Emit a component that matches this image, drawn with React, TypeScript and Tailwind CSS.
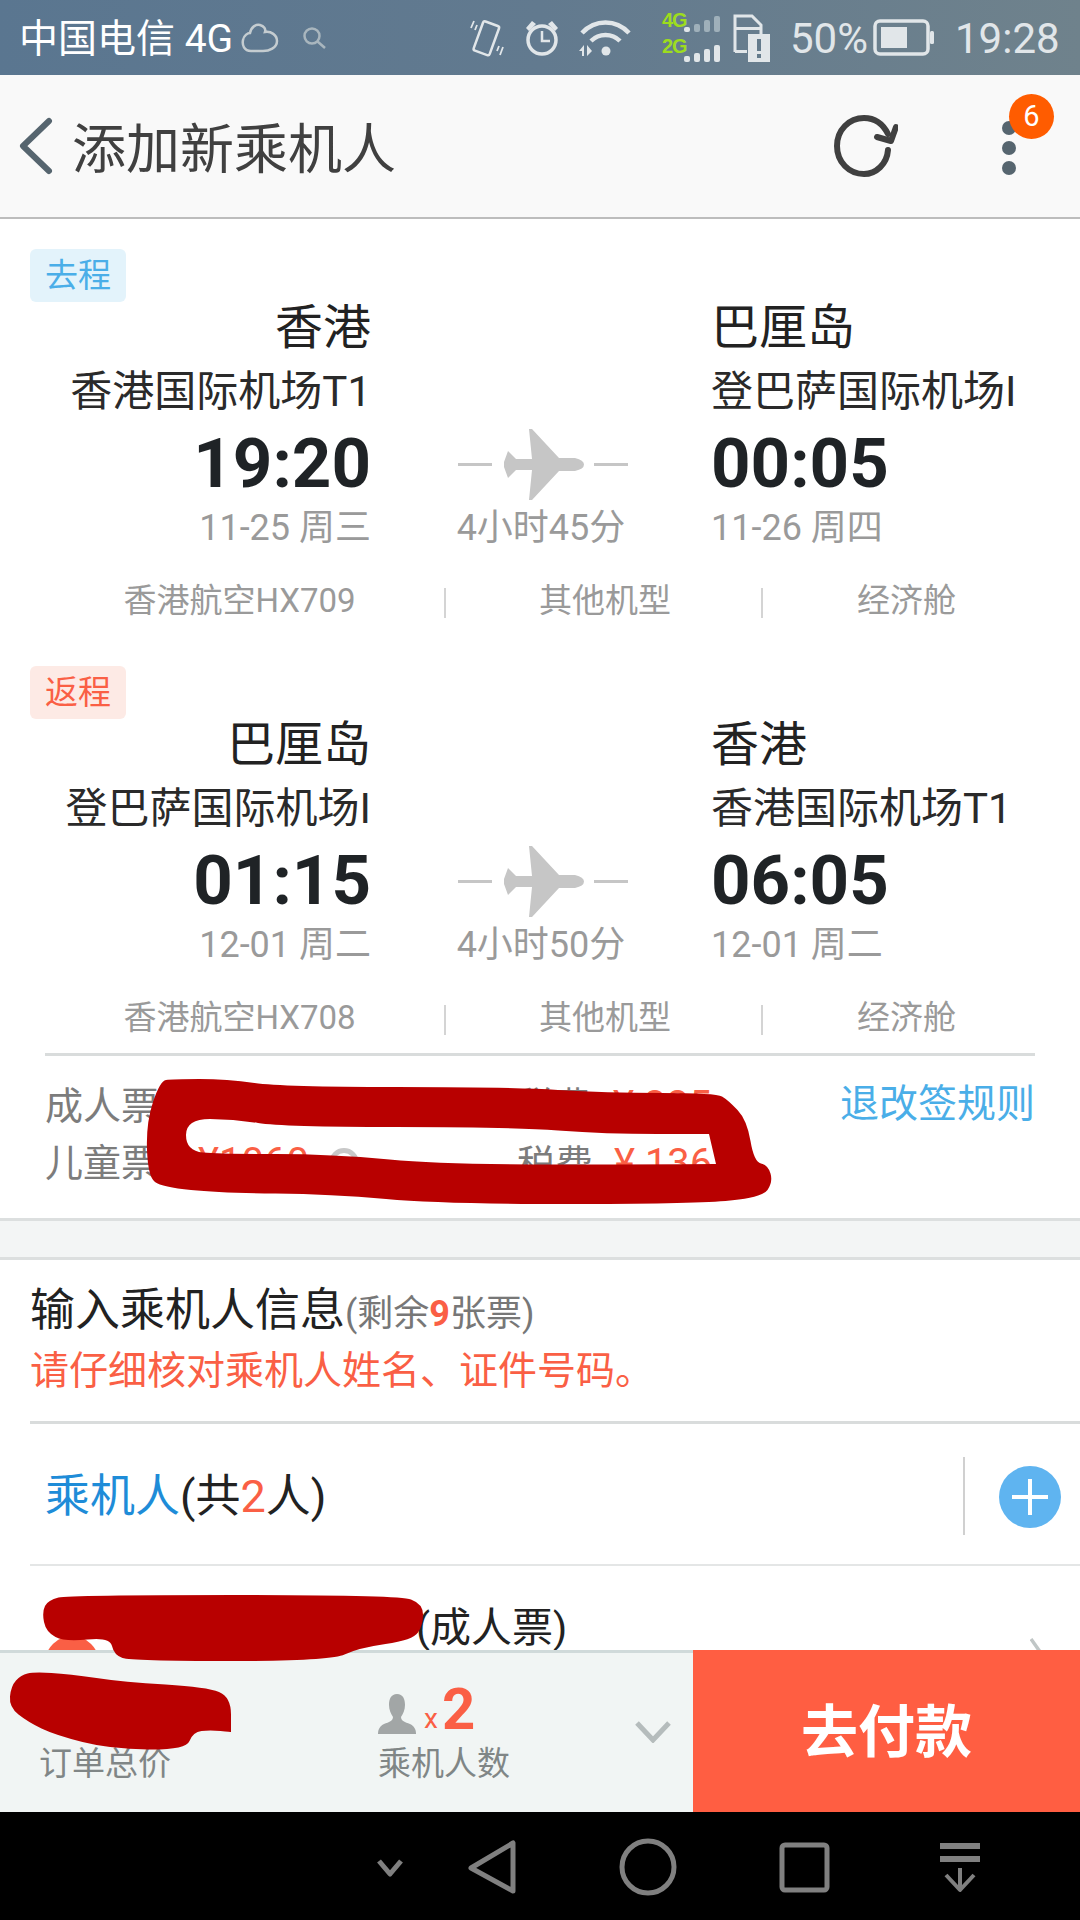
import React from 'react';

const fontStack = "[font-family:Roboto,'Noto_Sans_CJK_SC',sans-serif]";

const flights = [
  {
    tag: '去程',
    tagClass: 'bg-[#e3f3fb] text-[#4aaee8]',
    fromCity: '香港',
    fromPort: '香港国际机场T1',
    fromTime: '19:20',
    fromDate: '11-25 周三',
    toCity: '巴厘岛',
    toPort: '登巴萨国际机场I',
    toTime: '00:05',
    toDate: '11-26 周四',
    duration: '4小时45分',
    flightNo: '香港航空HX709',
  },
  {
    tag: '返程',
    tagClass: 'bg-[#fdeae5] text-[#fa5f45]',
    fromCity: '巴厘岛',
    fromPort: '登巴萨国际机场I',
    fromTime: '01:15',
    fromDate: '12-01 周二',
    toCity: '香港',
    toPort: '香港国际机场T1',
    toTime: '06:05',
    toDate: '12-01 周二',
    duration: '4小时50分',
    flightNo: '香港航空HX708',
  },
];

// rounds off a polygon, a repeated point keeps its corner
const smooth = (pts: number[][]) => {
  const mid = (a: number[], b: number[]) => `${(a[0] + b[0]) / 2} ${(a[1] + b[1]) / 2}`;
  let d = `M${mid(pts[pts.length - 1], pts[0])}`;
  pts.forEach((p, i) => {
    d += ` Q${p[0]} ${p[1]} ${mid(p, pts[(i + 1) % pts.length])}`;
  });
  return d + ' Z';
};

const fareOuter = [[160, 1081], [172, 1079], [227, 1079], [282, 1087], [510, 1087], [606, 1093], [716, 1093], [728, 1100], [747, 1120], [754, 1162], [768, 1165], [773, 1182], [762, 1198], [689, 1204], [441, 1204], [331, 1194], [220, 1193], [162, 1187], [148, 1177], [146, 1123]];
const fareInner = [[186, 1119], [186, 1151], [220, 1154], [331, 1154], [448, 1165], [716, 1164], [716, 1164], [709, 1134], [709, 1134], [606, 1134], [510, 1127], [282, 1127], [234, 1119]];
const nameMark = [[69, 1595], [399, 1595], [423, 1604], [423, 1625], [413, 1640], [358, 1648], [331, 1661], [131, 1661], [114, 1655], [110, 1637], [65, 1642], [46, 1632], [42, 1612], [48, 1600]];
const totalMark = [[34, 1672], [69, 1674], [124, 1682], [207, 1687], [231, 1697], [231, 1732], [231, 1732], [210, 1730], [193, 1732], [186, 1750], [110, 1749], [55, 1735], [28, 1722], [9, 1707], [11, 1686], [21, 1675]];

// three columns: departure (right aligned), middle, arrival
const RouteRow = ({ left, mid, right, className }: { left: React.ReactNode; mid?: React.ReactNode; right: React.ReactNode; className: string }) => (
  <div className={`grid grid-cols-[371px_340px_1fr] items-center ${className}`}>
    <div className="text-right whitespace-nowrap">{left}</div>
    <div className="flex justify-center items-center">{mid}</div>
    <div className="whitespace-nowrap">{right}</div>
  </div>
);

const PlaneMark = () => (
  <svg className="ml-[3px] mt-[3px]" width="170" height="72" viewBox="0 0 170 72">
    <rect x="0" y="34" width="34" height="3" fill="#c6c6c6" />
    <rect x="136" y="34" width="34" height="3" fill="#c6c6c6" />
    <path
      transform="translate(45 0)"
      fill="#c6c6c6"
      d="M1 33 L5 22 L13 30 L29 30 L26 0 L29 0 L56 29 L72 29 Q81 31 81 35.5 Q81 40 72 42 L56 42 L29 71 L26 71 L29 41 L13 41 L5 49 L1 38 Z"
    />
  </svg>
);

const FlightBlock = ({ f, last }: { f: (typeof flights)[number]; last: boolean }) => (
  <div className={last ? 'pb-[11px]' : 'pb-[41px]'}>
    <div className={`ml-[30px] w-[96px] h-[53px] rounded-md flex items-center justify-center text-[33px] ${f.tagClass}`}>{f.tag}</div>
    <RouteRow className="h-[52px] text-[48px] leading-[52px] text-[#222]" left={f.fromCity} right={f.toCity} />
    <RouteRow className="h-[52px] mt-[12px] text-[42px] leading-[52px] text-[#2a2a2a]" left={f.fromPort} right={f.toPort} />
    <RouteRow
      className="h-[72px] mt-[8px] text-[69px] leading-[72px] font-bold text-[#1f2326]"
      left={f.fromTime}
      mid={<PlaneMark />}
      right={f.toTime}
    />
    <RouteRow
      className="h-[44px] mt-[8px] text-[36px] leading-[44px] text-[#9a9a9a]"
      left={f.fromDate}
      mid={<span>{f.duration}</span>}
      right={f.toDate}
    />
    <div className="mt-[31px] ml-[35px] h-[44px] grid grid-cols-[411px_317px_287px] items-center text-[33px] text-[#9a9a9a]">
      <div className="h-[30px] text-center border-r-2 border-[#d4d4d4] leading-[30px]">
        <span className="block -mt-[2px]">{f.flightNo}</span>
      </div>
      <div className="h-[30px] pl-[3px] text-center border-r-2 border-[#d4d4d4] leading-[30px]">
        <span className="block -mt-[2px]">其他机型</span>
      </div>
      <div className="h-[30px] text-center leading-[30px]">
        <span className="block -mt-[2px]">经济舱</span>
      </div>
    </div>
  </div>
);

const StatusBar = () => (
  <div className="h-[75px] shrink-0 flex items-center bg-gradient-to-r from-[#5a7690] via-[#627a8f] to-[#6f828c] text-[#e1e6e9]">
    <span className="ml-[19px] w-[222px] mt-[3px] text-[39px] leading-none text-white whitespace-nowrap">中国电信 4G</span>
    <svg width="38" height="31" viewBox="0 0 38 31" fill="none" stroke="#c4ccd0" strokeWidth="2.5">
      <path d="M10 29 C3 29 1 23 2 18 C3 13 7 11 9 11 C10 5 15 2 19 3 C23 4 25 7 24 10 C30 9 36 13 36 19 C36 26 28 29 22 29 Z" />
    </svg>
    <svg className="ml-[24px]" width="23" height="22" viewBox="0 0 23 22" fill="none" stroke="#a9b6be" strokeWidth="2.5">
      <circle cx="9" cy="9" r="7.5" />
      <path d="M14.5 14.5 L22 21" />
    </svg>
    <svg className="ml-[144px]" width="34" height="40" viewBox="0 0 34 40" fill="none" stroke="#e1e6e9" strokeWidth="2.5">
      <rect x="8" y="5" width="17" height="31" rx="2" transform="rotate(20 17 20)" />
      <path d="M1 10 L4 3 M5 12 L7 7 M33 29 L30 37 M29 28 L27 33" strokeWidth="1.8" />
    </svg>
    <svg className="ml-[20px]" width="36" height="38" viewBox="0 0 36 38" fill="none" stroke="#e1e6e9" strokeWidth="3.5">
      <circle cx="18" cy="21" r="14" />
      <path d="M18 12 V22 H26" strokeWidth="2.5" />
      <path d="M2 9 L8 2 L12 5 L5 12 Z M34 9 L28 2 L24 5 L31 12 Z" fill="#e1e6e9" stroke="none" />
    </svg>
    <svg className="ml-[19px]" width="53" height="39" viewBox="0 0 53 39" fill="none" stroke="#e1e6e9" strokeWidth="4.5">
      <path d="M3 15 C16 1 37 1 50 15" />
      <path d="M12 23 C20 15 33 15 41 23" />
      <circle cx="27" cy="33" r="4.5" fill="#e1e6e9" stroke="none" />
      <path d="M0 33 L5 27 V38 H3 V33 Z M13 33 L8 27 V38 L8 38 Z" fill="#e1e6e9" stroke="none" />
    </svg>
    <div className="ml-[30px] w-[22px] h-[42px] -mt-[10px] flex flex-col justify-between font-bold text-[20px] leading-[16px] text-[#9ddc1e] [font-family:'Liberation_Sans',sans-serif] tracking-[-1px]">
      <span>4G</span>
      <span>2G</span>
    </div>
    <svg className="mt-[2px]" width="38" height="46" viewBox="0 0 38 46">
      <g fill="#9fb0ba">
        <rect x="10" y="8" width="6" height="8" rx="2" />
        <rect x="20" y="4" width="6" height="12" rx="2" />
        <rect x="30" y="0" width="6" height="16" rx="2" />
      </g>
      <g fill="#e1e6e9">
        <rect x="0" y="11" width="6" height="5" rx="2" />
        <rect x="0" y="40" width="6" height="6" rx="2" />
        <rect x="10" y="37" width="6" height="9" rx="2" />
        <rect x="20" y="33" width="6" height="13" rx="2" />
        <rect x="30" y="29" width="6" height="17" rx="2" />
      </g>
    </svg>
    <svg className="ml-[11px]" width="37" height="48" viewBox="0 0 37 48">
      <path fill="none" stroke="#e1e6e9" strokeWidth="3" d="M2 38 V2 H19 L28 11 V20" />
      <path fill="#e1e6e9" d="M2 13 H27 V16 H2 Z M2 36 H14 V39 H2 Z M15 20 H37 V48 H15 Z" />
      <rect x="24" y="25" width="4" height="12" fill="#647b8c" />
      <rect x="24" y="40" width="4" height="4" fill="#647b8c" />
    </svg>
    <span className="ml-[20px] w-[78px] mt-[3px] text-[42px] leading-none">50%</span>
    <svg className="ml-[5px]" width="61" height="37" viewBox="0 0 61 37">
      <rect x="2" y="2" width="53" height="33" rx="5" fill="none" stroke="#e1e6e9" strokeWidth="3.5" />
      <rect x="8" y="8" width="26" height="21" fill="#e1e6e9" />
      <rect x="57" y="12" width="4" height="13" rx="1.5" fill="#e1e6e9" />
    </svg>
    <span className="ml-[21px] mt-[3px] text-[42px] leading-none">19:28</span>
  </div>
);

const Header = () => (
  <div className="h-[144px] shrink-0 bg-[#f9f9f9] border-b-[2px] border-[#bdbdbd] flex items-center">
    <svg className="ml-[19px]" width="34" height="58" viewBox="0 0 34 58" fill="none" stroke="#56656f" strokeWidth="6" strokeLinecap="round" strokeLinejoin="round">
      <path d="M30 4 L4 29 L30 54" />
    </svg>
    <span className="ml-[19px] mt-[8px] w-[327px] text-[54px] text-[#404040] whitespace-nowrap">添加新乘机人</span>
    <svg className="ml-[435px]" width="64" height="62" viewBox="0 0 64 62" fill="none" stroke="#404040" strokeWidth="6" strokeLinecap="round" strokeLinejoin="round">
      <path d="M54 35 C53 49 42 59 30 59 C15 59 3 47 3 31 C3 15 15 3 30 3 C41 3 49 9 54 19" />
      <path d="M62 12 L57 26 L43 22" />
    </svg>
    <div className="relative ml-[104px] w-[14px] h-[54px] mt-[4px] flex flex-col justify-between">
      <span className="w-[14px] h-[14px] rounded-full bg-[#56656f]" />
      <span className="w-[14px] h-[14px] rounded-full bg-[#56656f]" />
      <span className="w-[14px] h-[14px] rounded-full bg-[#56656f]" />
      <span className="absolute left-[7px] top-[-27px] w-[45px] h-[45px] rounded-full bg-[#ff5c00] text-white text-[29px] flex items-center justify-center">6</span>
    </div>
  </div>
);

const FareBlock = () => (
  <div className="relative h-[165px] ml-[45px] mr-[45px] border-t-[3px] border-[#d9dcdc] text-[38px] text-[#7c7c7c]">
    <div className="flex h-[57px] mt-[20px] items-center">
      <span className="w-[471px] mt-[3px]">成人票</span>
      <span className="mt-[3px]">税费</span>
      <span className="ml-[21px] mt-[3px] text-[40px] text-[#fa5f45]">¥ 325</span>
      <span className="ml-auto -mt-[1px] text-[39px] text-[#4aaee8]">退改签规则</span>
    </div>
    <div className="flex h-[57px] items-center">
      <span className="w-[153px] mt-[3px]">儿童票</span>
      <span className="mt-[3px] text-[40px] text-[#fa5f45]">¥1060</span>
      <span className="ml-[20px] mt-[3px] w-[30px] h-[30px] rounded-full border-[5px] border-[#c8c8c8]" />
      <span className="ml-[158px] mt-[5px]">税费</span>
      <span className="ml-[21px] mt-[5px] text-[40px] text-[#fa5f45]">¥ 136</span>
    </div>
  </div>
);

const PassengerSection = () => (
  <div>
    <div className="h-[164px] ml-[30px] border-b-[3px] border-[#d9dcdc] pt-[22px]">
      <div className="flex items-baseline h-[58px] leading-[58px] whitespace-nowrap">
        <span className="text-[45px] text-[#222]">输入乘机人信息</span>
        <span className="text-[36px] text-[#777]">
          (剩余<b className="text-[#fa5f45]">9</b>张票)
        </span>
      </div>
      <div className="mt-[5px] text-[39px] leading-[52px] text-[#fa5f45]">请仔细核对乘机人姓名、证件号码。</div>
    </div>
    <div className="h-[142px] ml-[30px] border-b-[2px] border-[#e4e6e6] flex items-center">
      <span className="ml-[15px] mt-[6px] text-[45px] text-[#222] whitespace-nowrap">
        <span className="text-[#1e8cd8]">乘机人</span>(共<span className="text-[#fa5f45]">2</span>人)
      </span>
      <div className="ml-auto mt-[3px] h-[78px] w-[2px] bg-[#d0d0d0]" />
      <div className="relative ml-[34px] mr-[19px] mt-[6px] w-[62px] h-[62px] rounded-full bg-[#5fb4f0]">
        <span className="absolute left-[13px] top-[29px] w-[36px] h-[4px] bg-white" />
        <span className="absolute left-[29px] top-[13px] w-[4px] h-[36px] bg-white" />
      </div>
    </div>
    <div className="h-[118px] flex items-start relative">
      <div className="absolute left-[45px] top-[70px] w-[54px] h-[54px] rounded-full bg-[#fa5f45]" />
      <span className="ml-[416px] mt-[40px] text-[41px] leading-[44px] text-[#222] whitespace-nowrap">(成人票)</span>
      <svg className="absolute left-[1030px] top-[72px]" width="20" height="30" viewBox="0 0 20 30" fill="none" stroke="#c0c6c6" strokeWidth="3.5">
        <path d="M1 1 L18 25" />
      </svg>
    </div>
  </div>
);

const BottomBar = () => (
  <div className="h-[162px] shrink-0 flex relative z-10">
    <div className="w-[693px] bg-[#f1f5f4] border-t-[3px] border-[#d0dada] relative flex">
      <div className="w-[378px] pl-[39px] pt-[91px] text-[33px] leading-[40px] text-[#808686]">订单总价</div>
      <div className="w-[257px] pt-[26px]">
        <div className="flex items-end h-[55px]">
          <svg width="38" height="40" viewBox="0 0 38 40" fill="#a2a6a6">
            <path d="M19 0 C13 0 11 5 11 11 C11 16 13 20 15 23 C15 27 11 28 6 30 C2 32 0 35 0 40 H38 C38 35 36 32 32 30 C27 28 23 27 23 23 C25 20 27 16 27 11 C27 5 25 0 19 0 Z" />
          </svg>
          <span className="ml-[8px] text-[28px] leading-[30px] text-[#fa5f45]">x</span>
          <span className="ml-[4px] text-[58px] leading-[50px] font-bold text-[#fa5f45]">2</span>
        </div>
        <div className="text-[33px] leading-[40px] mt-[10px] text-[#808686]">乘机人数</div>
      </div>
      <svg className="mt-[68px]" width="36" height="22" viewBox="0 0 36 22" fill="none" stroke="#b5bcbc" strokeWidth="5">
        <path d="M2 2 L18 19 L34 2" />
      </svg>
    </div>
    <div className="flex-1 pt-[4px] bg-[#ff5e42] flex items-center justify-center text-[57px] font-bold text-white">去付款</div>
  </div>
);

const NavBar = () => (
  <div className="h-[108px] shrink-0 bg-black">
    <svg width="1080" height="108" viewBox="0 1812 1080 108" fill="none" stroke="#808080" strokeWidth="5" strokeLinejoin="round">
      <path d="M379 1861 L390 1874 L401 1861" />
      <path d="M513 1843 V1891 L471 1868 Z" />
      <circle cx="648" cy="1867" r="26" />
      <rect x="782" y="1845" width="45" height="45" rx="3" />
      <path d="M940 1846 H980 M940 1859 H980" strokeWidth="6" />
      <path d="M960 1868 V1889 M946 1875 L960 1890 L974 1875" strokeWidth="4" />
    </svg>
  </div>
);

const App: React.FC = () => {
  return (
    <div className={`relative w-[1080px] h-[1920px] overflow-hidden bg-white flex flex-col ${fontStack}`}>
      <StatusBar />
      <Header />

      <div className="flex-1 min-h-0 overflow-hidden">
        <div className="pt-[30px]">
          {flights.map((f, i) => (
            <FlightBlock key={f.tag} f={f} last={i === flights.length - 1} />
          ))}
        </div>
        <FareBlock />
        <div className="h-[42px] bg-[#f3f5f5] border-y-[3px] border-[#dcdfdf]" />
        <PassengerSection />
      </div>

      <BottomBar />
      <NavBar />

      {/* hand drawn redactions on top of the screenshot */}
      <svg className="absolute left-0 top-0 z-20 pointer-events-none" width="1080" height="1920" viewBox="0 0 1080 1920">
        <path fill="#b80000" fillRule="evenodd" d={`${smooth(fareOuter)} ${smooth(fareInner)}`} />
        <path fill="#b80000" d={smooth(nameMark)} />
        <path fill="#b80000" d={smooth(totalMark)} />
      </svg>
    </div>
  );
};

export default App;
